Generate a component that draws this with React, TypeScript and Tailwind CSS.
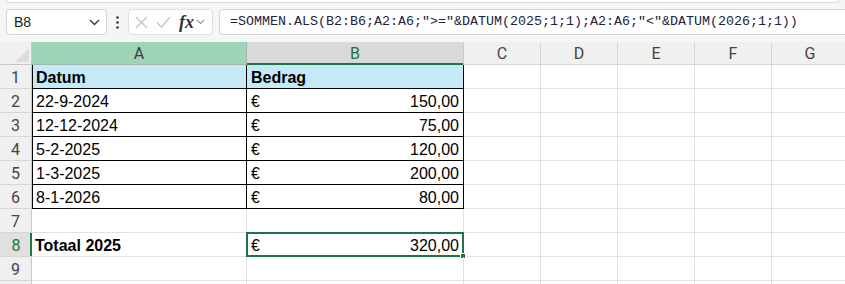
import React from 'react';

const COLS = ['A', 'B', 'C', 'D', 'E', 'F', 'G'];
const WIDTHS = ['w-[215px]', 'w-[217px]', 'w-[77px]', 'w-[77px]', 'w-[77px]', 'w-[77px]', 'w-[77px]'];

type Row = { a?: string; b?: string; bold?: boolean; table?: boolean; head?: boolean; label?: boolean };

const rows: Row[] = [
  { a: 'Datum', b: 'Bedrag', bold: true, table: true, head: true },
  { a: '22-9-2024', b: '150,00', table: true },
  { a: '12-12-2024', b: '75,00', table: true },
  { a: '5-2-2025', b: '120,00', table: true },
  { a: '1-3-2025', b: '200,00', table: true },
  { a: '8-1-2026', b: '80,00', table: true },
  {},
  { a: 'Totaal 2025', b: '320,00', bold: true },
  {},
  { label: false },
];

const App: React.FC = () => {
  return (
    <div className="w-[845px] h-[284px] overflow-hidden bg-[#f5f5f5] font-['Liberation_Sans',Arial,sans-serif] text-black select-none">
      {/* ribbon edge */}
      <div className="h-[3px] mx-[6px] bg-white border-x border-b border-[#dcdcdc] rounded-b-[4px]"></div>

      {/* formula bar */}
      <div className="flex items-center h-[26px] mt-[6px] pl-[6px]">
        <div className="w-[101px] h-full bg-white border border-[#d4d4d4] rounded-[4px] flex items-center justify-between pl-[7px] pr-[6px]">
          <span className="text-[14px] text-[#222]">B8</span>
          <svg width="11" height="7" viewBox="0 0 11 7"><path d="M1 1l4.5 4.5L10 1" fill="none" stroke="#333" strokeWidth="1.3" /></svg>
        </div>
        <div className="w-[21px] flex justify-center">
          <svg width="3" height="13" viewBox="0 0 3 13"><circle cx="1.5" cy="1.5" r="1.3" fill="#333" /><circle cx="1.5" cy="6.5" r="1.3" fill="#333" /><circle cx="1.5" cy="11.5" r="1.3" fill="#333" /></svg>
        </div>
        <div className="w-[85px] h-full bg-white border border-[#e0e0e0] rounded-[4px] flex items-center pl-[6px] gap-[8px]">
          <svg width="13" height="13" viewBox="0 0 13 13"><path d="M1 1l11 11M12 1L1 12" stroke="#c2c2c2" strokeWidth="1.2" /></svg>
          <svg width="15" height="12" viewBox="0 0 15 12"><path d="M1 6.5l4.5 4.5L14 1" fill="none" stroke="#c2c2c2" strokeWidth="1.2" /></svg>
          <div className="flex items-center gap-[2px]">
            <span className="font-['Liberation_Serif',serif] italic font-bold text-[18px] text-[#333] leading-none">fx</span>
            <svg width="9" height="6" viewBox="0 0 9 6"><path d="M1 1l3.5 3.5L8 1" fill="none" stroke="#999" strokeWidth="1.1" /></svg>
          </div>
        </div>
        <div className="ml-[6px] flex-1 h-full bg-white border border-[#d4d4d4] rounded-[4px] flex items-center pl-[10px] mr-[-10px]">
          <span className="font-['Liberation_Mono',monospace] text-[13.33px] text-[#1a2440] whitespace-nowrap">
            =SOMMEN.ALS(B2:B6;A2:A6;"&gt;="&amp;DATUM(2025;1;1);A2:A6;"&lt;"&amp;DATUM(2026;1;1))
          </span>
        </div>
      </div>

      {/* sheet */}
      <div className="mt-[7px] flex flex-col">
        {/* column headers */}
        <div className="flex h-[23px]">
          <div className="w-[32px] shrink-0 bg-[#f0f0f0] border-r border-b border-[#c8c8c8] flex items-end justify-end p-[2px]">
            <svg width="14" height="14" viewBox="0 0 14 14"><path d="M14 0L14 14L0 14Z" fill="#dcdcdc" /></svg>
          </div>
          {COLS.map((c, i) => (
            <div
              key={c}
              className={`${WIDTHS[i]} shrink-0 flex items-center justify-center pt-[1px] text-[16px] font-['Roboto',sans-serif] ${
                c === 'A'
                  ? 'bg-[#9fd5b7] text-[#3c3c3c] border-b border-r border-[#a6b5ab]'
                  : c === 'B'
                  ? 'bg-[#d9d9d9] text-[#217346] border-r border-[#c8c8c8] shadow-[inset_0_-2px_0_#217346]'
                  : 'bg-[#f0f0f0] text-[#444] border-r border-b border-[#d6d6d6]'
              }`}
            >
              {c}
            </div>
          ))}
        </div>

        {rows.map((r, idx) => {
          const n = idx + 1;
          const sel = n === 8;
          return (
            <div key={n} className="flex h-[24px] bg-white">
              <div
                className={`w-[32px] shrink-0 flex items-center justify-center pt-[2px] text-[16px] font-['Roboto',sans-serif] border-b border-[#d6d6d6] ${
                  sel
                    ? 'bg-[#e0e0e0] text-[#217346] shadow-[inset_-2px_0_0_#217346]'
                    : 'bg-[#f0f0f0] text-[#444] border-r border-r-[#c8c8c8]'
                }`}
              >
                {r.label === false ? '' : n}
              </div>
              {/* A */}
              <div
                className={`w-[215px] shrink-0 flex items-center pt-[3px] text-[16px] ${r.bold ? 'font-bold' : ''} ${
                  r.table
                    ? `border-r border-b border-black shadow-[inset_1px_0_0_#000] pl-[4px] ${r.head ? 'bg-[#c6e9f8]' : ''}`
                    : 'border-r border-b border-[#e1e1e1] pl-[3px]'
                }`}
              >
                {r.a}
              </div>
              {/* B */}
              <div
                className={`relative w-[217px] shrink-0 flex items-center justify-between pt-[3px] pl-[4px] pr-[4px] text-[16px] ${r.bold && r.head ? 'font-bold' : ''} ${
                  r.table
                    ? `border-r border-b border-black ${r.head ? 'bg-[#c6e9f8]' : ''}`
                    : 'border-r border-b border-[#e1e1e1]'
                }`}
              >
                {r.head ? (
                  <span>{r.b}</span>
                ) : r.b ? (
                  <>
                    <span>€</span>
                    <span>{r.b}</span>
                  </>
                ) : null}
                {sel && (
                  <>
                    <div className="absolute left-[-1px] top-[-1px] right-[-1px] bottom-[-1px] border-2 border-[#217346]"></div>
                    <div className="absolute right-[-3px] bottom-[-3px] w-[6px] h-[6px] bg-[#217346] border border-white"></div>
                  </>
                )}
              </div>
              {COLS.slice(2).map((c) => (
                <div key={c} className="w-[77px] shrink-0 border-r border-b border-[#e1e1e1]"></div>
              ))}
            </div>
          );
        })}
      </div>
    </div>
  );
};

export default App;
